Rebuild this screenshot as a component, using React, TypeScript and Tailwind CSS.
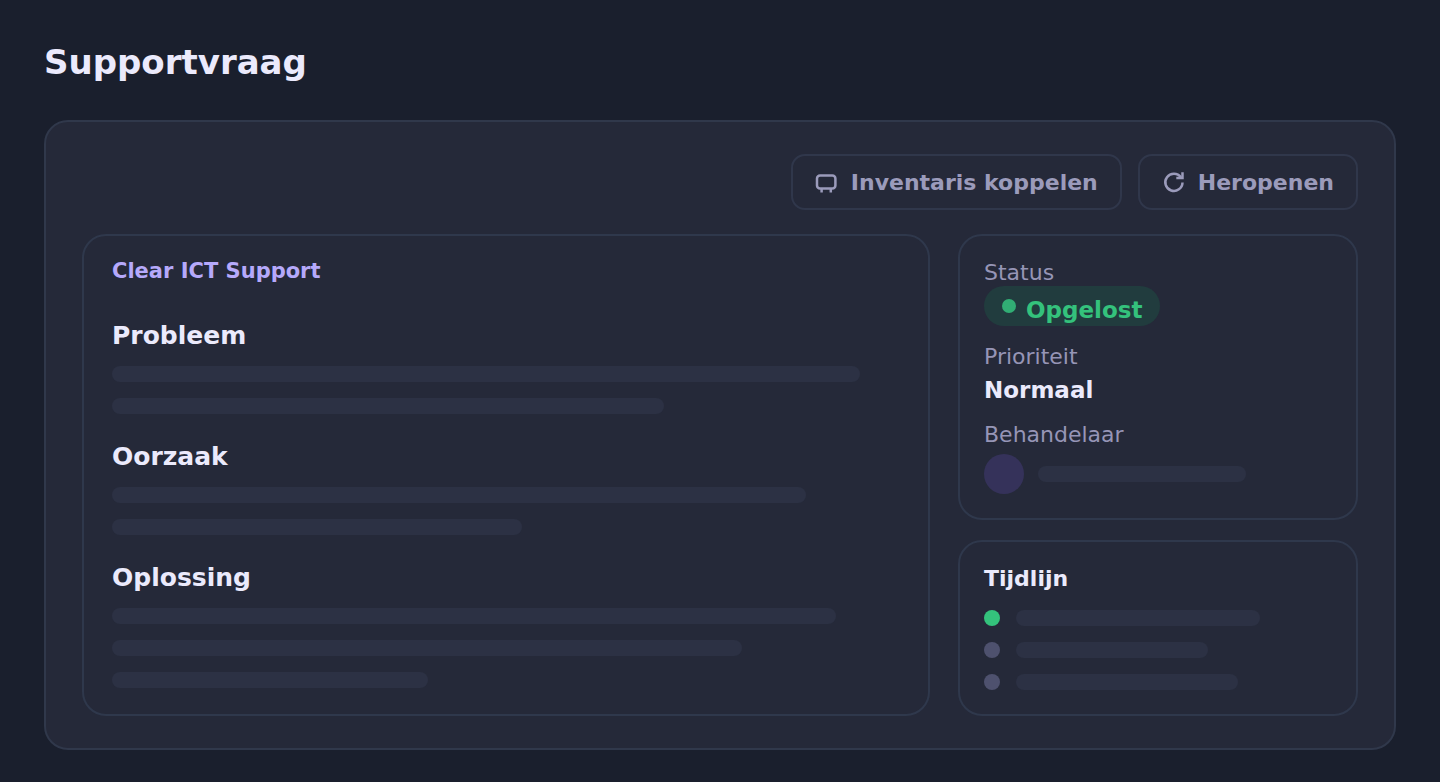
import type { ReactNode } from "react";

const sections = [
  { title: "Probleem", bars: ["w-[748px]", "w-[552px]"] },
  { title: "Oorzaak", bars: ["w-[694px]", "w-[410px]"] },
  { title: "Oplossing", bars: ["w-[724px]", "w-[630px]", "w-[316px]"] },
];

const timeline = [
  { dot: "bg-[#34c27c]", bar: "w-[244px]" },
  { dot: "bg-[#4e516e]", bar: "w-[192px]" },
  { dot: "bg-[#4e516e]", bar: "w-[222px]" },
];

function Bar({ width }: { width: string }) {
  return <div className={`h-4 max-w-full rounded-lg bg-[#2c3144] ${width}`} />;
}

function ActionButton({ icon, children }: { icon: ReactNode; children: ReactNode }) {
  return (
    <button
      type="button"
      className="flex h-14 items-center gap-3 rounded-[14px] border-2 border-[#30374b] px-[22px] pt-0.5 text-[22px] leading-7 font-bold text-[#9b9bbb]"
    >
      {icon}
      {children}
    </button>
  );
}

function Panel({ className, children }: { className: string; children: ReactNode }) {
  return <section className={`rounded-3xl border-2 border-[#2f384c] ${className}`}>{children}</section>;
}

const DeviceIcon = () => (
  <svg className="size-6" viewBox="0 0 24 24" fill="none" stroke="currentColor" strokeWidth="2.5" aria-hidden="true">
    <rect x="2" y="4.6" width="18.4" height="12.8" rx="3" />
    <path d="M6.6 17.4v4.2M15.8 17.4v4.2" />
  </svg>
);

const ReopenIcon = () => (
  <svg className="size-6" viewBox="0 0 24 24" fill="none" stroke="currentColor" strokeWidth="2.5" aria-hidden="true">
    <path d="M20.5 11.4a8.6 8.6 0 1 1-1.6-5.1" />
    <path d="M20.5 1.2v5.9h-6.2" />
  </svg>
);

export default function App() {
  return (
    <main className="min-h-screen bg-[#1a1f2d] px-11 pt-10 pb-8 font-['DejaVu_Sans',sans-serif] text-[#ebeafc]">
      <h1 className="text-[34px] leading-[44px] font-bold">Supportvraag</h1>

      <div className="mt-9 rounded-3xl border-2 border-[#30384b] bg-[#252939] px-9 py-8">
        <div className="flex flex-wrap justify-end gap-4">
          <ActionButton icon={<DeviceIcon />}>Inventaris koppelen</ActionButton>
          <ActionButton icon={<ReopenIcon />}>Heropenen</ActionButton>
        </div>

        <div className="mt-6 flex gap-7">
          <Panel className="flex min-w-0 flex-1 flex-col px-7 pt-[21px]">
            <p className="text-[21px] leading-7 font-bold text-[#b6a9fb]">Clear ICT Support</p>
            <div className="mt-[35px] flex flex-col gap-[27px]">
              {sections.map((section) => (
                <div key={section.title}>
                  <h2 className="text-[25px] leading-8 font-bold">{section.title}</h2>
                  <div className="mt-3.5 flex flex-col gap-4">
                    {section.bars.map((width) => (
                      <Bar key={width} width={width} />
                    ))}
                  </div>
                </div>
              ))}
            </div>
          </Panel>

          <div className="flex w-[400px] shrink-0 flex-col gap-5">
            <Panel className="p-6">
              <dl className="text-[22px] leading-[26px] text-[#9695b6]">
                <dt>Status</dt>
                <dd className="flex h-10 w-fit items-center gap-2.5 rounded-full bg-[#213c3e] px-[18px] font-bold text-[#34c27c]">
                  <span className="size-3.5 rounded-full bg-[#31ae74]" />
                  <span className="pt-2 text-[23px] leading-8">Opgelost</span>
                </dd>
                <dt className="mt-[18px]">Prioriteit</dt>
                <dd className="mt-1.5 text-[23px] leading-7 font-bold text-[#ebeafc]">Normaal</dd>
                <dt className="mt-[18px]">Behandelaar</dt>
                <dd className="mt-1.5 flex items-center gap-3.5">
                  <span className="size-10 rounded-full bg-[#35325a]" />
                  <Bar width="w-[208px]" />
                </dd>
              </dl>
            </Panel>

            <Panel className="p-6">
              <h2 className="text-[22px] leading-[26px] font-bold">Tijdlijn</h2>
              <ul className="mt-[18px] flex flex-col gap-4">
                {timeline.map((item) => (
                  <li key={item.bar} className="flex items-center gap-4">
                    <span className={`size-4 rounded-full ${item.dot}`} />
                    <Bar width={item.bar} />
                  </li>
                ))}
              </ul>
            </Panel>
          </div>
        </div>
      </div>
    </main>
  );
}
